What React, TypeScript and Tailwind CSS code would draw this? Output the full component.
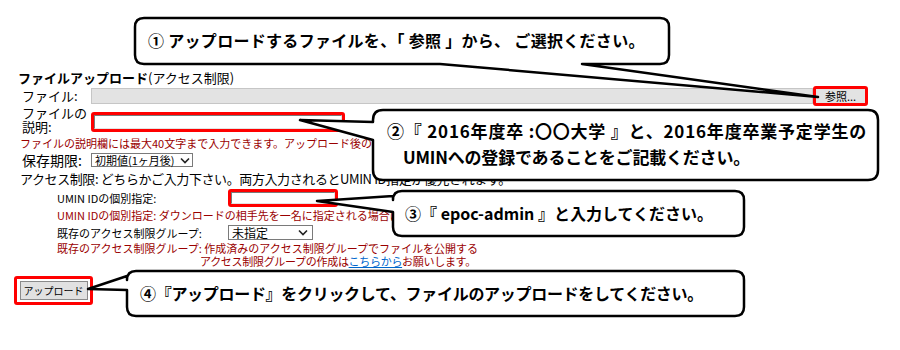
import React from "react";

const Chevron = () => (
  <svg width="10" height="7" viewBox="0 0 10 7" className="shrink-0">
    <path d="M1 1.5 L5 5.5 L9 1.5" fill="none" stroke="#222" strokeWidth="1.6" />
  </svg>
);

const RedFrame = ({ className, children }: { className: string; children?: React.ReactNode }) => (
  <div className={`flex items-center justify-center rounded-[3px] border-[3px] border-[#ff0000] ${className}`}>{children}</div>
);

export default function App() {
  return (
    <div
      className="relative h-[350px] w-[900px] overflow-hidden bg-white text-black"
      style={{ fontFamily: '"Noto Sans CJK JP", "Noto Sans", sans-serif' }}
    >
      <div className="flex flex-col pt-[70px]">
        {/* title */}
        <div className="h-[16px] pl-[18px] text-[13px] leading-[16px]">
          <span className="font-bold">ファイルアップロード</span>(アクセス制限)
        </div>
        {/* file row */}
        <div className="flex h-[20px] items-center pl-[22px]">
          <div className="w-[69px] text-[13px] leading-[14px]">ファイル:</div>
          <div className="h-[16px] w-[722px] border border-[#c6c6c6] bg-[#e3e3e3]" />
          <RedFrame className="h-[20px] w-[55px] bg-white">
            <div className="flex h-[14px] w-[49px] items-center justify-center bg-[#e3e3e3] text-[11px] leading-[14px]">参照...</div>
          </RedFrame>
        </div>
        {/* description row */}
        <div className="flex h-[30px] items-start pl-[22px]">
          <div className="w-[69px] text-[13px] leading-[14px]">
            <div>ファイルの</div>
            <div>説明:</div>
          </div>
          <RedFrame className="mt-[6px] h-[20px] w-[254px]">
            <div className="h-[14px] w-[248px] border border-t-[#7a7a7a] border-l-[#7a7a7a] border-r-[#e3e3e3] border-b-[#e3e3e3] bg-white" />
          </RedFrame>
        </div>
        {/* note */}
        <div className="h-[14px] pl-[20px] text-[11px] leading-[14px] text-[#9a0000]">
          ファイルの説明欄には最大40文字まで入力できます。アップロード後の変更はできません。
        </div>
        {/* retention */}
        <div className="flex h-[20px] items-center pl-[22px]">
          <div className="w-[69px] text-[14px] leading-[16px]">保存期限:</div>
          <div className="flex h-[14px] w-[102px] items-center justify-between border border-[#7a7a7a] pl-[3px] pr-[2px] text-[11px] leading-[12px]">
            <span>初期値(1ヶ月後)</span>
            <Chevron />
          </div>
        </div>
        {/* access */}
        <div className="h-[18px] pl-[20px] text-[13px] leading-[18px] tracking-[-0.4px]">
          アクセス制限: どちらかご入力下さい。両方入力されるとUMIN ID指定が優先されます。
        </div>
        {/* sub rows */}
        <div className="flex flex-col pl-[57px] text-[11px]">
          <div className="flex h-[19px] items-center">
            <div className="w-[171px] leading-[14px]">UMIN IDの個別指定:</div>
            <RedFrame className="h-[18px] w-[110px]">
              <div className="h-[12px] w-[104px] border border-t-[#7a7a7a] border-l-[#7a7a7a] border-r-[#e3e3e3] border-b-[#e3e3e3] bg-white" />
            </RedFrame>
          </div>
          <div className="h-[16px] leading-[16px] text-[#9a0000]">
            UMIN IDの個別指定: ダウンロードの相手先を一名に指定される場合はこちらに入力してください。
          </div>
          <div className="flex h-[19px] items-center">
            <div className="w-[171px] leading-[14px]">既存のアクセス制限グループ:</div>
            <div className="flex h-[15px] w-[85px] items-center justify-between border border-[#7a7a7a] pl-[3px] pr-[4px] text-[12px] leading-[13px]">
              <span>未指定</span>
              <Chevron />
            </div>
          </div>
          <div className="h-[13px] leading-[13px] text-[#9a0000]">
            既存のアクセス制限グループ: 作成済みのアクセス制限グループでファイルを公開する
          </div>
          <div className="h-[13px] pl-[143px] leading-[13px] tracking-[-0.3px] text-[#9a0000]">
            アクセス制限グループの作成は<span className="text-[#0066cc] underline">こちらから</span>お願いします。
          </div>
        </div>
        {/* upload */}
        <div className="mt-[8px] pl-[14px]">
          <RedFrame className="h-[29px] w-[79px]">
            <div className="flex h-[19px] w-[68px] items-center justify-center border border-[#8a8a8a] bg-[#e1e1e1] text-[10px] leading-[12px]">
              アップロード
            </div>
          </RedFrame>
        </div>
      </div>

      {/* callout shapes */}
      <svg className="absolute left-0 top-0" width="900" height="350" viewBox="0 0 900 350">
        <g fill="white" stroke="black" strokeWidth="2.5" strokeLinejoin="round">
          <path d="M144 18 H660 Q669 18 669 27 V55 Q669 64 660 64 H582 L818 97 L440 64 H144 Q135 64 135 55 V27 Q135 18 144 18 Z" />
          <path d="M383 110 H868 Q878 110 878 120 V170 Q878 180 868 180 H383 Q373 180 373 170 V140 L300 120 L373 122 V120 Q373 110 383 110 Z" />
          <path d="M402 191 H735 Q744 191 744 200 V227 Q744 236 735 236 H402 Q393 236 393 227 V212 L317 201 L393 196 V200 Q393 191 402 191 Z" />
          <path d="M136 271 H735 Q744 271 744 280 V307 Q744 316 735 316 H136 Q127 316 127 307 V290 L88 289 L127 276 V280 Q127 271 136 271 Z" />
        </g>
      </svg>

      {/* callout texts */}
      <div className="absolute left-[148px] top-[29px] whitespace-nowrap text-[16px] font-bold leading-[22px] tracking-[0.3px]">
        ① アップロードするファイルを、「 参照 」から、 ご選択ください。
      </div>
      <div className="absolute left-[387px] top-[119px] whitespace-nowrap text-[17px] font-bold leading-[24px] tracking-[0.8px]">
        ②『 2016年度卒 :〇〇大学 』と、2016年度卒業予定学生の
      </div>
      <div className="absolute left-[403px] top-[145px] whitespace-nowrap text-[17px] font-bold leading-[24px] tracking-[-0.2px]">
        UMINへの登録であることをご記載ください。
      </div>
      <div className="absolute left-[405px] top-[202px] whitespace-nowrap text-[16px] font-bold leading-[22px]">
        ③『 epoc-admin 』と入力してください。
      </div>
      <div className="absolute left-[140px] top-[282px] whitespace-nowrap text-[16px] font-bold leading-[22px] tracking-[-0.3px]">
        ④『アップロード』をクリックして、ファイルのアップロードをしてください。
      </div>
    </div>
  );
}
